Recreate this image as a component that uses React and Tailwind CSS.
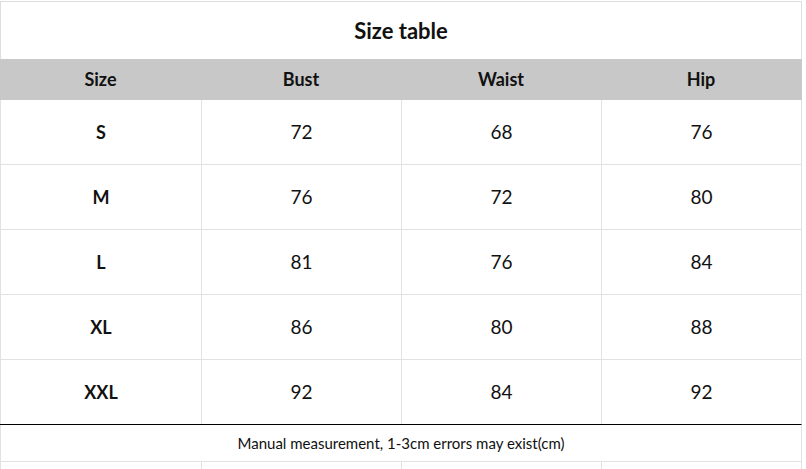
const rows = [
  ["S", "72", "68", "76"],
  ["M", "76", "72", "80"],
  ["L", "81", "76", "84"],
  ["XL", "86", "80", "88"],
  ["XXL", "92", "84", "92"],
];

const heads = ["Size", "Bust", "Waist", "Hip"];

export default function App() {
  return (
    <div className="w-[806px] h-[469px] bg-white overflow-hidden text-[#111] font-['Lato','Liberation_Sans',sans-serif]">
      <div className="mt-px w-[802px] border-t border-[#dedede]">
        <div className="h-[57px] flex items-center justify-center border-x border-[#dedede] text-[22px] font-bold">
          Size table
        </div>
        <div className="h-[41px] grid grid-cols-[201px_200px_200px_200px] bg-[#c8c8c8] text-[18px] font-bold">
          {heads.map((h) => (
            <div key={h} className="flex items-center justify-center">{h}</div>
          ))}
        </div>
        {rows.map((r, i) => (
          <div
            key={r[0]}
            className={`h-[65px] grid grid-cols-[201px_200px_200px_200px] border-r border-b border-r-[#dedede] ${i < rows.length - 1 ? "border-b-[#e2e2e2]" : "border-b-black"}`}
          >
            {r.map((c, j) => (
              <div
                key={j}
                className={`flex items-center justify-center border-l border-[#e2e2e2] ${j === 0 ? "font-bold text-[18px]" : "text-[19px]"}`}
              >
                {c}
              </div>
            ))}
          </div>
        ))}
        <div className="h-[37px] flex items-center justify-center border-x border-b border-[#e2e2e2] text-[15px]">
          Manual measurement, 1-3cm errors may exist(cm)
        </div>
        <div className="h-[8px] grid grid-cols-[201px_200px_200px_200px] border-r border-[#e2e2e2]">
          {heads.map((h) => (
            <div key={h} className="border-l border-[#e2e2e2]" />
          ))}
        </div>
      </div>
    </div>
  );
}
